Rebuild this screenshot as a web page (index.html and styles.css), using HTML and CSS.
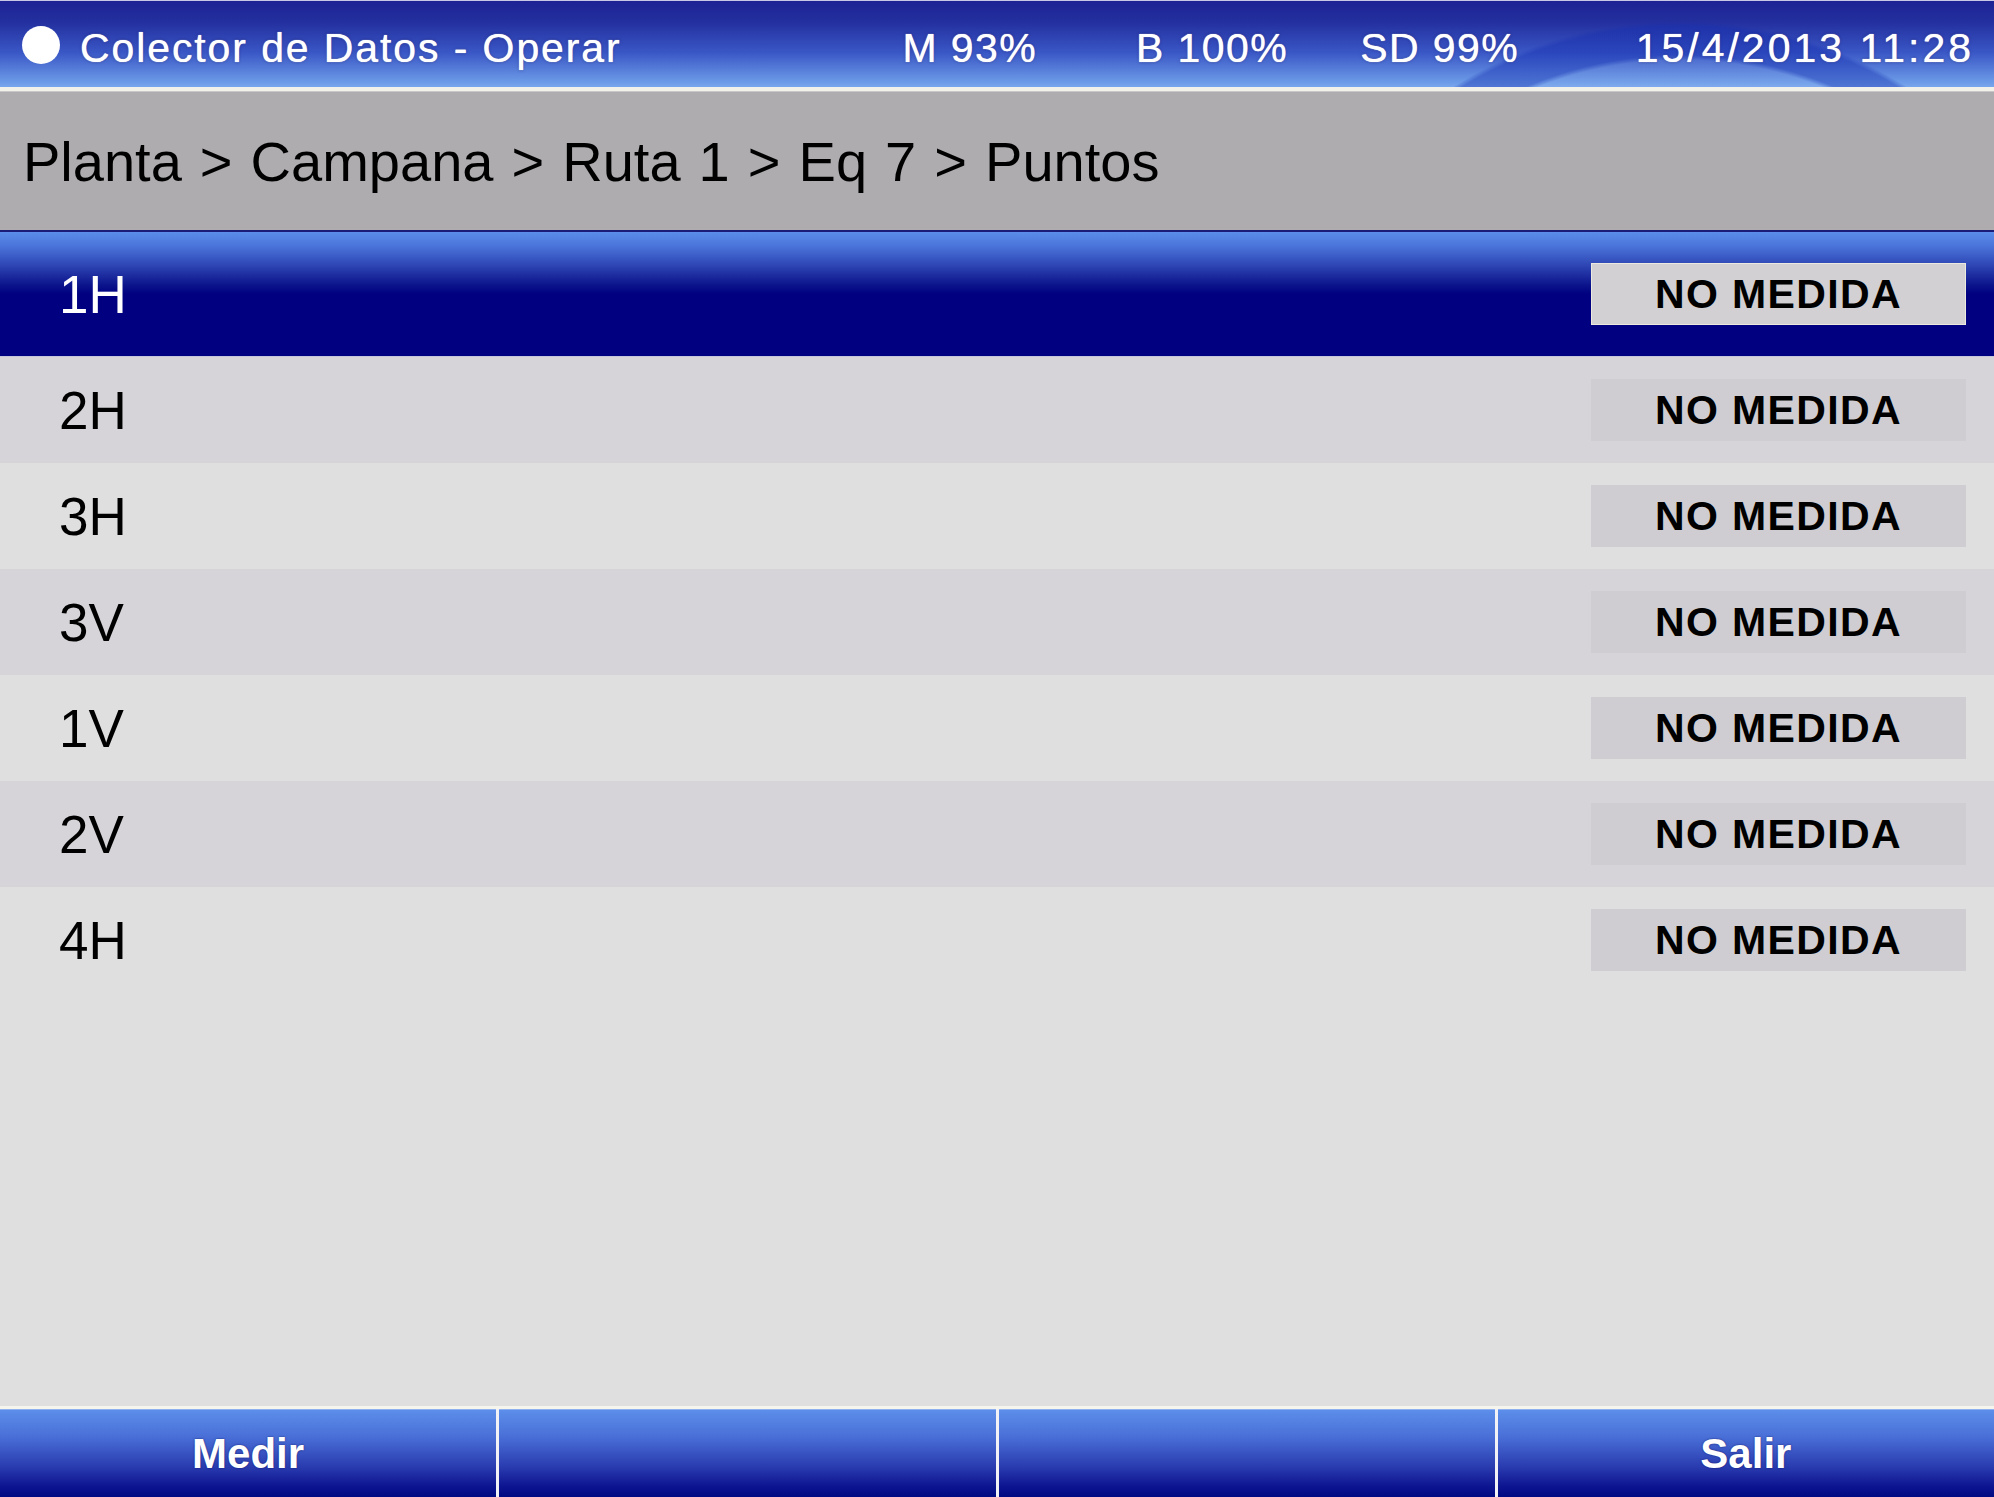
FILE: index.html
```html
<!DOCTYPE html>
<html lang="es">

<head>
    <meta charset="UTF-8">
    <meta name="viewport" content="width=device-width, initial-scale=1.0">
    <title>Colector de Datos - Operar</title>
    <link rel="stylesheet" href="styles.css">
</head>

<body>
    <div class="screen">
        <!-- Title bar -->
        <header class="titlebar">
            <div class="title"><span class="dot"></span>Colector de Datos - Operar</div>
            <div class="stat">M 93%</div>
            <div class="stat">B 100%</div>
            <div class="stat">SD 99%</div>
            <div class="stat clock">15/4/2013 11:28</div>
        </header>

        <!-- Breadcrumb -->
        <nav class="crumbs">Planta &gt; Campana &gt; Ruta 1 &gt; Eq 7 &gt; Puntos</nav>

        <!-- Points list -->
        <ul class="points">
            <li class="point selected"><span class="name">1H</span><span class="status">NO MEDIDA</span></li>
            <li class="point"><span class="name">2H</span><span class="status">NO MEDIDA</span></li>
            <li class="point"><span class="name">3H</span><span class="status">NO MEDIDA</span></li>
            <li class="point"><span class="name">3V</span><span class="status">NO MEDIDA</span></li>
            <li class="point"><span class="name">1V</span><span class="status">NO MEDIDA</span></li>
            <li class="point"><span class="name">2V</span><span class="status">NO MEDIDA</span></li>
            <li class="point"><span class="name">4H</span><span class="status">NO MEDIDA</span></li>
        </ul>

        <!-- Soft keys -->
        <footer class="softkeys">
            <button>Medir</button>
            <button></button>
            <button></button>
            <button>Salir</button>
        </footer>
    </div>
</body>

</html>
```

FILE: styles.css
```css
body {
    margin: 0;
    font-family: "Liberation Sans", Arial, sans-serif;
    background-color: #dfdfdf;
}

.screen {
    display: flex;
    flex-direction: column;
    height: 100vh;
    overflow: hidden;
}

.titlebar {
    display: grid;
    grid-template-columns: 1fr 160px 251px 231px 455px;
    align-items: center;
    box-sizing: border-box;
    height: 91px;
    padding: 8px 20px 0 0;
    border-top: 1px solid #c6c8e4;
    border-bottom: 4px solid #f3f2ea;
    color: white;
    font-size: 41px;
    text-shadow: 0 0 1px #fff, 0 0 3px rgba(10, 10, 80, 0.5);
    background:
        radial-gradient(circle at 1680px 445px, rgba(255, 255, 255, 0.05) 0 386px, rgba(20, 45, 175, 0.4) 391px 420px, transparent 425px),
        linear-gradient(#1d2394 0%, #24309f 25%, #3a57c6 60%, #6d9ce8 95%, #7aa6ec 100%);
}

.title {
    display: flex;
    align-items: center;
    gap: 20px;
    padding-left: 22px;
    letter-spacing: 1.9px;
}

.dot {
    width: 38px;
    height: 38px;
    margin-top: -6px;
    border-radius: 50%;
    background-color: white;
}

.stat {
    text-align: right;
    letter-spacing: 1.4px;
}

.clock {
    letter-spacing: 3px;
}

.crumbs {
    display: flex;
    align-items: center;
    height: 138px;
    padding-left: 23px;
    border-top: 1px solid #c9c7c9;
    background-color: #aeacaf;
    font-size: 56px;
    word-spacing: 2.5px;
    color: black;
}

.points {
    flex: 1;
    margin: 0;
    padding: 0;
    list-style: none;
    border-top: 2px solid #1b1c78;
}

.point {
    display: flex;
    align-items: center;
    justify-content: space-between;
    height: 106px;
    padding: 0 28px 0 59px;
    font-size: 53px;
    color: black;
}

.point:nth-child(even) {
    background-color: #d6d4d8;
}

.point.selected {
    height: 124px;
    border-bottom: 1px solid #c4c6dc;
    color: white;
    background: linear-gradient(#5b8de9 0, #4a74da 14px, #2d44b2 34px, #0a128a 54px, #000080 62px);
}

.status {
    display: flex;
    align-items: center;
    justify-content: center;
    box-sizing: border-box;
    width: 375px;
    height: 62px;
    background-color: #cfcdd1;
    color: black;
    font-size: 41px;
    font-weight: bold;
    letter-spacing: 1.4px;
}

.selected .status {
    background-color: #d2d0d3;
    border: 1px solid #ece9df;
}

.softkeys {
    display: grid;
    grid-template-columns: repeat(4, 1fr);
    gap: 3px;
    height: 88px;
    border-top: 3px solid #f5f4ed;
    background-color: #f2f2f6;
}

.softkeys button {
    border: none;
    border-top: 1px solid #8fb0f0;
    padding: 0;
    background: linear-gradient(#5c8eea 0%, #4a70d8 30%, #2a3cb0 65%, #0d1490 88%, #000a82 100%);
    color: white;
    font-family: "Liberation Sans", Arial, sans-serif;
    font-size: 42px;
    font-weight: bold;
    text-shadow: 0 0 2px rgba(10, 10, 80, 0.7);
    cursor: pointer;
}
```
